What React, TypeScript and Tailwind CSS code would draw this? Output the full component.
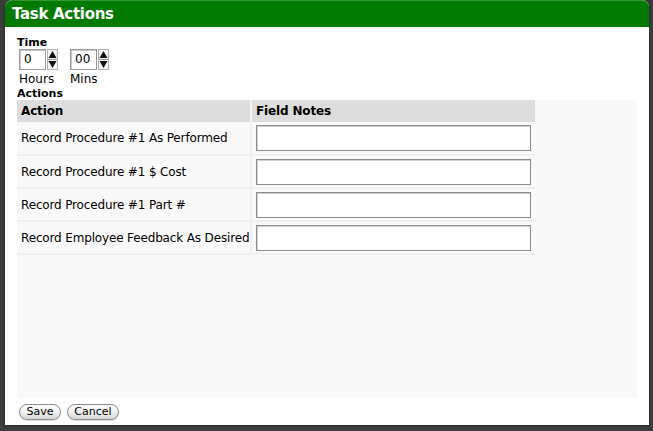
import { useState } from "react";

const rows = [
  "Record Procedure #1 As Performed",
  "Record Procedure #1 $ Cost",
  "Record Procedure #1 Part #",
  "Record Employee Feedback As Desired",
];

function Spinner({ value, label }: { value: string; label: string }) {
  return (
    <div className="flex flex-col">
      <div className="flex items-center">
        <div className="w-[27px] h-[21px] border border-[#9a9a9a] bg-white shadow-[inset_1px_1px_0_#c8c8c8] text-[12px] leading-[19px] pl-[4px]">
          {value}
        </div>
        <div className="ml-[1px] w-[11px] h-[21px] border border-[#b0b0b0] bg-[#f4f4f4] flex items-center justify-center">
          <svg width="9" height="19" viewBox="0 0 9 19">
            <path d="M4.5 1 L8.5 8 L0.5 8 Z" fill="#111" />
            <rect x="0" y="9" width="9" height="1" fill="#999" />
            <path d="M4.5 18 L8.5 11 L0.5 11 Z" fill="#111" />
          </svg>
        </div>
      </div>
      <span className="text-[12px] leading-[14px] mt-[2px]">{label}</span>
    </div>
  );
}

function PillButton({ children, w }: { children: string; w: string }) {
  return (
    <button
      className={`${w} h-[16px] rounded-full border border-[#8a8a8a] bg-gradient-to-b from-white via-[#f0f0f0] to-[#d6d6d6] text-[11px] leading-[14px] text-black shadow-[0_1px_1px_rgba(0,0,0,0.15)]`}
    >
      {children}
    </button>
  );
}

export default function App() {
  const [notes, setNotes] = useState(["", "", "", ""]);

  return (
    <div className="w-[653px] h-[431px] bg-[#3c3c3c] pl-[5px] pr-[4px] pb-[6px] overflow-hidden font-['DejaVu_Sans',Verdana,sans-serif] text-black">
      <div className="w-full h-full bg-white rounded-t-[7px] flex flex-col shadow-[0_0_3px_rgba(0,0,0,0.6)]">
        <div className="h-[27px] bg-[#007b00] rounded-t-[7px] border-t border-[#2f9a2f] px-[7px] flex items-center">
          <h1 className="text-white font-bold text-[15px] leading-[18px] tracking-[-0.3px]">Task Actions</h1>
        </div>

        <div className="flex flex-col pl-[12px] pt-[10px] flex-1">
          <span className="font-bold text-[11px] leading-[12px]">Time</span>
          <div className="flex gap-[12px] pl-[2px]">
            <Spinner value="0" label="Hours" />
            <Spinner value="00" label="Mins" />
          </div>
          <span className="font-bold text-[11px] leading-[12px] mt-[2px]">Actions</span>

          <div className="w-[620px] h-[298px] bg-[#f9f9f9]">
            <table className="border-collapse text-[12px] tracking-[-0.15px] w-[518px]">
              <thead>
                <tr className="bg-[#dddddd] h-[22px]">
                  <th className="text-left font-bold pl-[4px] w-[234px] border-r-2 border-[#f4f4f4]">Action</th>
                  <th className="text-left font-bold pl-[4px]">Field Notes</th>
                </tr>
              </thead>
              <tbody>
                {rows.map((r, i) => (
                  <tr key={r} className="h-[33px] border-b-2 border-[#efefef]">
                    <td className="pl-[4px] border-r-2 border-[#efefef] whitespace-nowrap">{r}</td>
                    <td className="pl-[4px] pr-[3px]">
                      <input
                        value={notes[i]}
                        onChange={(e) => {
                          const n = [...notes];
                          n[i] = e.target.value;
                          setNotes(n);
                        }}
                        className="block w-[275px] h-[26px] bg-white border border-[#8c8c8c] shadow-[inset_1px_1px_0_#d0d0d0] outline-none"
                      />
                    </td>
                  </tr>
                ))}
              </tbody>
            </table>
          </div>

          <div className="flex gap-[6px] mt-[6px] pl-[2px]">
            <PillButton w="w-[42px]">Save</PillButton>
            <PillButton w="w-[52px]">Cancel</PillButton>
          </div>
        </div>
      </div>
    </div>
  );
}
